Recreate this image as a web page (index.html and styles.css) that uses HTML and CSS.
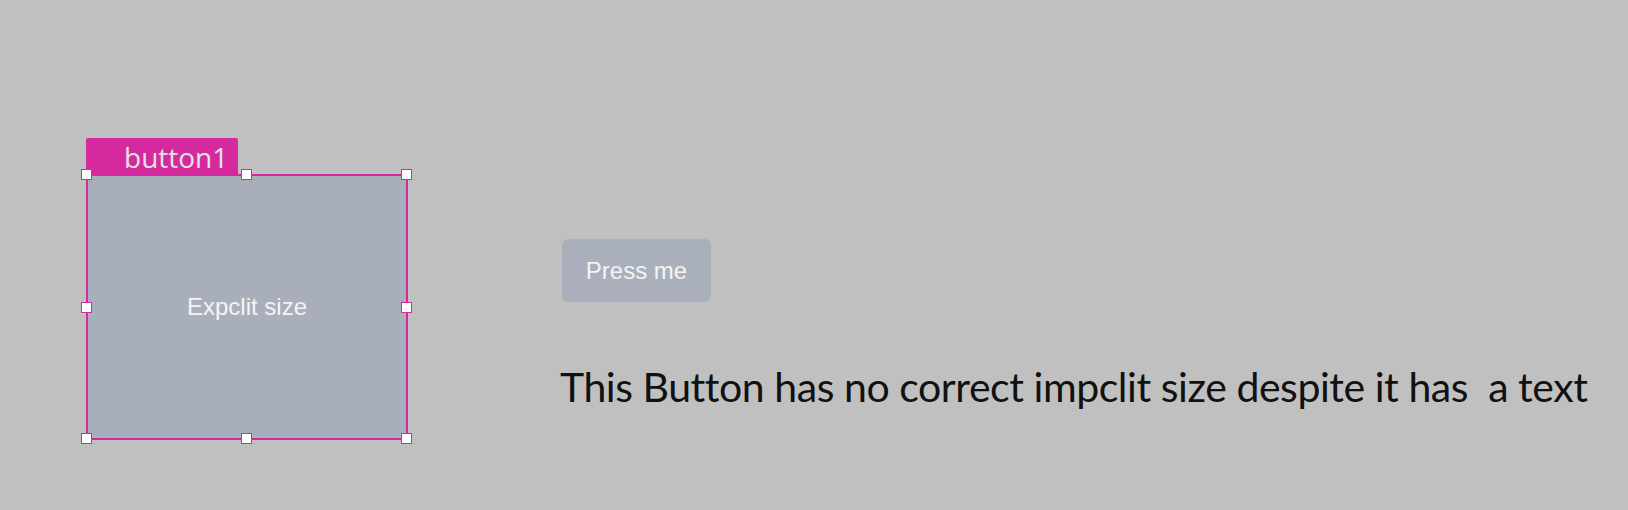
FILE: index.html
```html
<!DOCTYPE html>
<html>
<head>
<meta charset="utf-8">
<link rel="stylesheet" href="styles.css">
</head>
<body>
<div class="canvas">
  <div class="selection">
    <div class="tab">button1</div>
    <div class="frame">
      <div class="widget">Expclit size</div>
      <span class="handle h-tl"></span>
      <span class="handle h-tc"></span>
      <span class="handle h-tr"></span>
      <span class="handle h-ml"></span>
      <span class="handle h-mr"></span>
      <span class="handle h-bl"></span>
      <span class="handle h-bc"></span>
      <span class="handle h-br"></span>
    </div>
  </div>
  <div class="demo">
    <button class="press">Press me</button>
    <p class="note">This Button has no correct impclit size despite it has&nbsp; a text</p>
  </div>
</div>
</body>
</html>
```
FILE: styles.css
```css
html, body {
  margin: 0;
  padding: 0;
  background: #c0c0c0;
  width: 1628px;
  height: 510px;
  overflow: hidden;
}

.canvas {
  display: flex;
  align-items: flex-start;
  padding-left: 86px;
}

.selection {
  margin-top: 138px;
  display: flex;
  flex-direction: column;
}

.tab {
  width: 152px;
  height: 36px;
  box-sizing: border-box;
  padding: 2px 0 0 38px;
  background: #d42a9d;
  border-radius: 2px 2px 0 0;
  color: #e4e4e4;
  font-family: "Open Sans", "Noto Sans", sans-serif;
  font-size: 28px;
  line-height: 34px;
  white-space: nowrap;
}

.frame {
  position: relative;
  width: 322px;
  height: 266px;
  box-sizing: border-box;
  border: 2px solid #d42a9d;
}

.widget {
  width: 100%;
  height: 100%;
  background: #a9afba;
  display: flex;
  align-items: center;
  justify-content: center;
  color: #f4f4f4;
  font-family: "Liberation Sans", Arial, sans-serif;
  font-size: 24px;
  padding-bottom: 1px;
  box-sizing: border-box;
}

.handle {
  position: absolute;
  width: 11px;
  height: 11px;
  box-sizing: border-box;
  background: #ffffff;
  border: 1px solid #d42a9d;
}

.h-tl { left: -7px; top: -7px; }
.h-tc { left: 153px; top: -7px; }
.h-tr { right: -6px; top: -7px; }
.h-ml { left: -7px; top: 126px; }
.h-mr { right: -6px; top: 126px; }
.h-bl { left: -7px; bottom: -6px; }
.h-bc { left: 153px; bottom: -6px; }
.h-br { right: -6px; bottom: -6px; }

.demo {
  margin-left: 152px;
  display: flex;
  flex-direction: column;
  align-items: flex-start;
}

.press {
  margin: 239px 0 0 2px;
  width: 149px;
  height: 63px;
  border: none;
  border-radius: 6px;
  background: #aab0bb;
  color: #f4f4f4;
  font-family: "Liberation Sans", Arial, sans-serif;
  font-size: 24px;
  padding: 0;
}

.note {
  margin: 60px 0 0 0;
  font-family: Lato, "Open Sans", sans-serif;
  font-size: 41px;
  letter-spacing: -0.45px;
  color: #111111;
  white-space: nowrap;
}
```
